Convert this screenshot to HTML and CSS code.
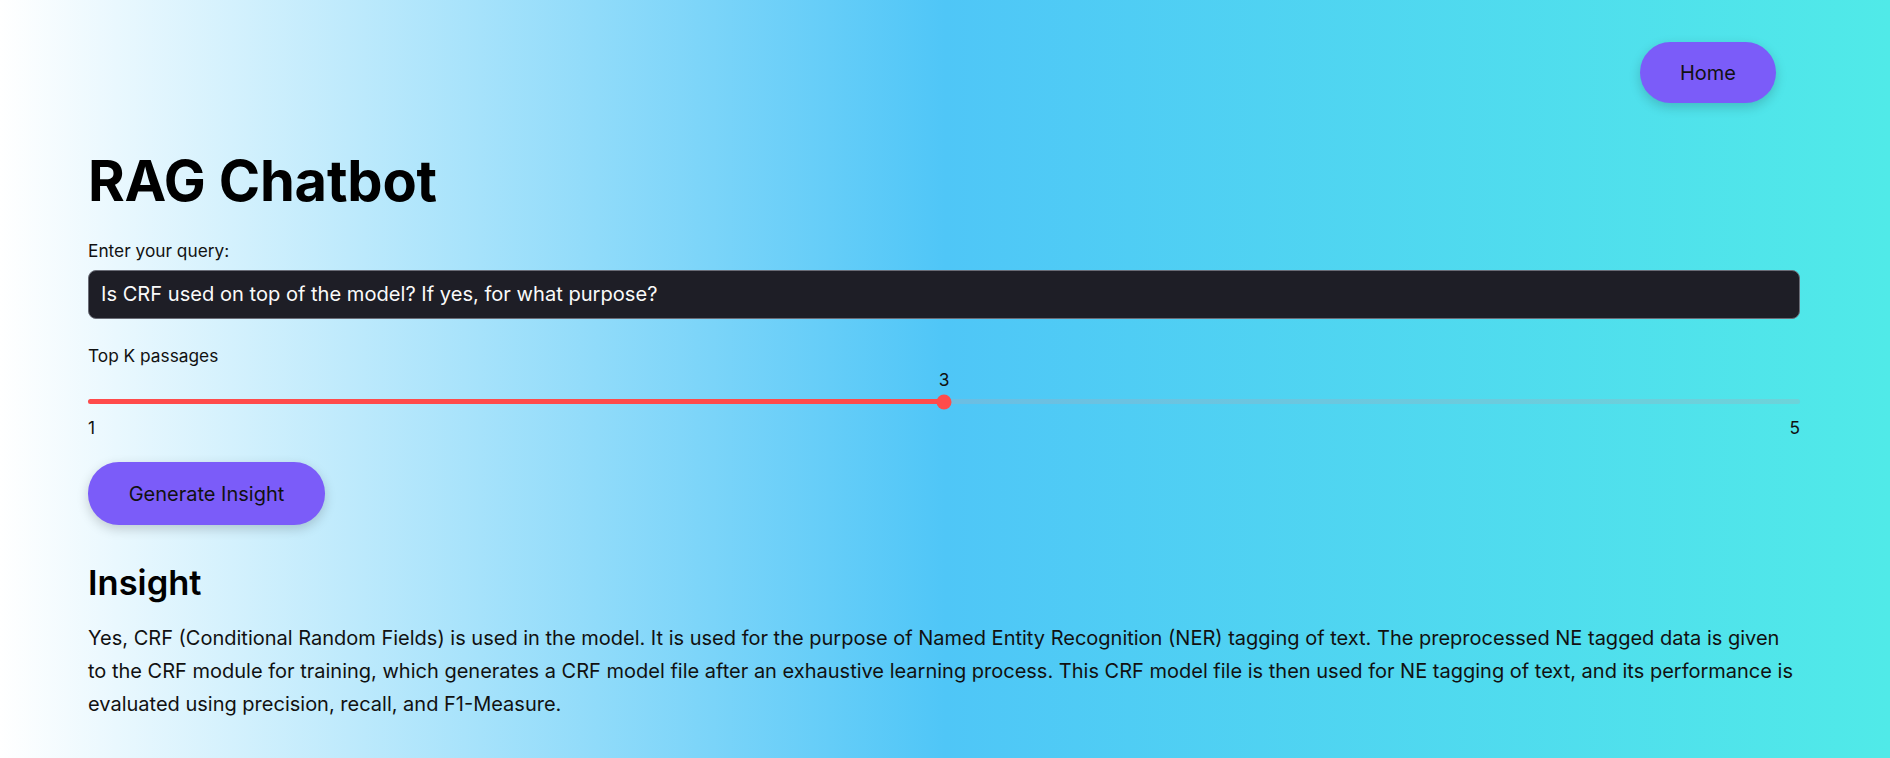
FILE: index.html
```html
<!DOCTYPE html>
<html lang="en">
<head>
<meta charset="utf-8">
<title>RAG Chatbot</title>
<link rel="stylesheet" href="styles.css">
</head>
<body>
<div class="page">
  <div class="topbar">
    <button class="btn btn-home">Home</button>
  </div>
  <h1 class="title">RAG Chatbot</h1>
  <label class="label">Enter your query:</label>
  <div class="input">Is CRF used on top of the model? If yes, for what purpose?</div>
  <div class="label label-slider">Top K passages</div>
  <div class="slider">
    <div class="slider-value-row">
      <span class="slider-value" style="left:50%">3</span>
    </div>
    <div class="track">
      <div class="track-fill" style="width:50%"></div>
      <div class="thumb" style="left:50%"></div>
    </div>
    <div class="ticks">
      <span>1</span>
      <span>5</span>
    </div>
  </div>
  <button class="btn btn-generate">Generate Insight</button>
  <h2 class="subtitle">Insight</h2>
  <p class="answer">Yes, CRF (Conditional Random Fields) is used in the model. It is used for the purpose of Named Entity Recognition (NER) tagging of text. The preprocessed NE tagged data is given to the CRF module for training, which generates a CRF model file after an exhaustive learning process. This CRF model file is then used for NE tagging of text, and its performance is evaluated using precision, recall, and F1-Measure.</p>
</div>
</body>
</html>
```
FILE: styles.css
```css
html, body {
  margin: 0;
  padding: 0;
}

body {
  font-family: Inter, "Noto Sans", sans-serif;
  color: #111;
}

.page {
  min-height: 100vh;
  box-sizing: border-box;
  background: linear-gradient(to right, #ffffff 0%, #4fc6f7 50%, #50eae8 100%);
  padding: 42px 90px 40px 88px;
  display: flex;
  flex-direction: column;
}

.topbar {
  display: flex;
  justify-content: flex-end;
  padding-right: 24px;
}

.btn {
  font-family: Inter, "Noto Sans", sans-serif;
  font-size: 20px;
  color: #111;
  background: #7b5cf9;
  border: none;
  border-radius: 31px;
  box-shadow: 0 4px 12px rgba(0, 0, 0, 0.18);
  cursor: pointer;
}

.btn-home {
  height: 61px;
  width: 136px;
}

.title {
  margin: 46px 0 0 0;
  font-size: 56px;
  line-height: 64px;
  font-weight: 700;
  letter-spacing: -0.2px;
  color: #000;
}

.label {
  display: block;
  margin-top: 26px;
  font-size: 17.3px;
  line-height: 24px;
}

.input {
  margin-top: 7px;
  height: 49px;
  box-sizing: border-box;
  background: #1e1e26;
  border: 1px solid #6a6c76;
  border-radius: 8px;
  color: #fafafa;
  font-size: 20.1px;
  line-height: 47px;
  padding: 0 12px;
}

.label-slider {
  margin-top: 25px;
}

.slider {
  display: flex;
  flex-direction: column;
}

.slider-value-row {
  position: relative;
  height: 24px;
}

.slider-value {
  position: absolute;
  top: 0;
  transform: translateX(-50%);
  font-size: 17.3px;
  line-height: 24px;
}

.track {
  position: relative;
  margin-top: 7px;
  height: 5px;
  border-radius: 3px;
  background: rgba(160, 175, 190, 0.35);
}

.track-fill {
  height: 100%;
  border-radius: 3px;
  background: #ff4b4b;
}

.thumb {
  position: absolute;
  top: 50%;
  width: 15px;
  height: 15px;
  border-radius: 50%;
  background: #ff4b4b;
  transform: translate(-50%, -50%);
}

.ticks {
  margin-top: 12px;
  display: flex;
  justify-content: space-between;
  font-size: 17.3px;
  line-height: 24px;
}

.btn-generate {
  align-self: flex-start;
  margin-top: 22px;
  height: 63px;
  width: 237px;
}

.subtitle {
  margin: 38px 0 0 0;
  font-size: 34.5px;
  line-height: 40px;
  font-weight: 600;
  color: #000;
}

.answer {
  margin: 19px 0 0 0;
  font-size: 20px;
  line-height: 33px;
}
```
